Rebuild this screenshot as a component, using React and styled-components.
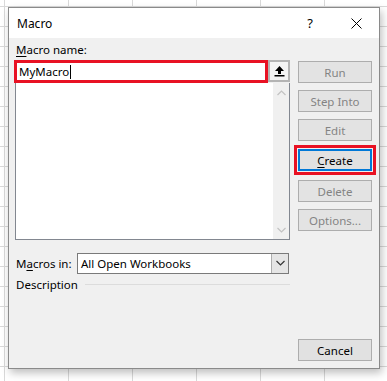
import { styled, createGlobalStyle } from "styled-components";

const GlobalStyle = createGlobalStyle`
  html, body {
    margin: 0;
    padding: 0;
  }
  body {
    width: 387px;
    height: 381px;
    overflow: hidden;
    background-color: #ffffff;
    background-image:
      linear-gradient(to right, #d9d9d9 1px, transparent 1px),
      linear-gradient(to bottom, #d9d9d9 1px, transparent 1px);
    background-size: 64px 20px;
    background-position: 4px 6px;
    font-family: "Noto Sans", "Open Sans", sans-serif;
    font-size: 11.5px;
  }
`;

const Dialog = styled.div`
  margin: 7px 0 0 8px;
  width: 370px;
  height: 360px;
  border: 1px solid #8a8a8a;
  background: #f0f0f0;
  box-shadow: 2px 4px 8px rgba(0, 0, 0, 0.25);
  display: flex;
  flex-direction: column;
`;

const TitleBar = styled.div`
  height: 30px;
  background: #ffffff;
  display: flex;
  align-items: center;
  padding-left: 8px;
  color: #000;
  font-size: 12px;
`;

const Title = styled.span`
  flex: 1;
`;

const TitleButton = styled.span`
  width: 46px;
  display: flex;
  justify-content: center;
  align-items: center;
  font-size: 13px;
`;

const Body = styled.div`
  flex: 1;
  display: flex;
  padding: 0 7px 7px 5px;
`;

const LeftCol = styled.div`
  width: 276px;
  display: flex;
  flex-direction: column;
`;

const RightCol = styled.div`
  margin-left: 8px;
  width: 75px;
  display: flex;
  flex-direction: column;
  padding-top: 23px;
`;

const Label = styled.div`
  padding-left: 2px;
  height: 22px;
  line-height: 18px;
  padding-top: 3px;
  box-sizing: border-box;
  color: #000;
  u {
    text-decoration: underline;
    text-underline-offset: 2px;
  }
`;

const NameRow = styled.div`
  display: flex;
  height: 23px;
`;

const NameInput = styled.div`
  width: 254px;
  box-sizing: border-box;
  border: 3px solid #e81123;
  background: #fff;
  padding-left: 2px;
  line-height: 17px;
  color: #000;
  display: flex;
  align-items: center;
`;

const Caret = styled.span`
  display: inline-block;
  width: 1px;
  height: 14px;
  background: #000;
  margin-left: 1px;
`;

const CollapseButton = styled.div`
  width: 22px;
  height: 22px;
  box-sizing: border-box;
  border: 2px solid #b4b4b4;
  background: #f4f4f4;
  display: flex;
  align-items: center;
  justify-content: center;
`;

const ListBox = styled.div`
  margin-left: 1px;
  height: 157px;
  box-sizing: border-box;
  border: 1px solid #828790;
  border-top: none;
  background: #fff;
  display: flex;
  justify-content: flex-end;
`;

const ScrollBar = styled.div`
  width: 16px;
  background: #f0f0f0;
  display: flex;
  flex-direction: column;
  justify-content: space-between;
  align-items: center;
  padding: 7px 0 6px;
`;

const ComboRow = styled.div`
  margin-top: 13px;
  display: flex;
  align-items: center;
  height: 20px;
`;

const ComboLabel = styled.span`
  width: 61px;
  padding-left: 2px;
  color: #000;
  u {
    text-decoration: underline;
    text-underline-offset: 2px;
  }
`;

const Combo = styled.div`
  width: 212px;
  height: 21px;
  box-sizing: border-box;
  border: 1px solid #7a7a7a;
  background: #fff;
  display: flex;
  align-items: center;
`;

const ComboText = styled.span`
  flex: 1;
  padding-left: 3px;
  color: #000;
`;

const ComboArrow = styled.span`
  width: 16px;
  height: 19px;
  background: #e5e5e5;
  border-left: 1px solid #adadad;
  display: flex;
  align-items: center;
  justify-content: center;
`;

const DescRow = styled.div`
  margin-top: 2px;
  display: flex;
  align-items: center;
  height: 18px;
`;

const DescText = styled.span`
  padding-left: 2px;
  color: #000;
`;

const DescLine = styled.span`
  flex: 1;
  height: 1px;
  background: #dcdcdc;
  margin-left: 7px;
`;

const Button = styled.div`
  height: 22px;
  box-sizing: border-box;
  margin-top: ${(p) => p.$gap || 0}px;
  border: ${(p) => (p.$focused ? "2px solid #0078d7" : "1px solid #adadad")};
  background: ${(p) => (p.$disabled ? "#e3e3e3" : "#e1e1e1")};
  color: ${(p) => (p.$disabled ? "#838383" : "#000")};
  display: flex;
  align-items: center;
  justify-content: center;
  outline: ${(p) => (p.$highlight ? "3px solid #e81123" : "none")};
  outline-offset: 1px;
  u {
    text-decoration: underline;
    text-underline-offset: 2px;
  }
`;

const Spacer = styled.div`
  flex: 1;
`;

const Chevron = ({ up, color }) => (
  <svg width="9" height="6" viewBox="0 0 9 6">
    <path
      d={up ? "M0.5 5 L4.5 1 L8.5 5" : "M0.5 1 L4.5 5 L8.5 1"}
      fill="none"
      stroke={color}
      strokeWidth="1.2"
    />
  </svg>
);

const App = () => {
  return (
    <>
      <GlobalStyle />
      <Dialog>
        <TitleBar>
          <Title>Macro</Title>
          <TitleButton>?</TitleButton>
          <TitleButton>
            <svg width="11" height="11" viewBox="0 0 11 11">
              <path d="M0.5 0.5 L10.5 10.5 M10.5 0.5 L0.5 10.5" stroke="#000" strokeWidth="1" />
            </svg>
          </TitleButton>
        </TitleBar>
        <Body>
          <LeftCol>
            <Label>
              <u>M</u>acro name:
            </Label>
            <NameRow>
              <NameInput>
                MyMacro
                <Caret />
              </NameInput>
              <CollapseButton>
                <svg width="11" height="12" viewBox="0 0 11 12">
                  <path d="M5.5 1 L10 6 L7 6 L7 9 L4 9 L4 6 L1 6 Z" fill="#000" />
                  <rect x="0.5" y="10" width="10" height="1.5" fill="#000" />
                </svg>
              </CollapseButton>
            </NameRow>
            <ListBox>
              <ScrollBar>
                <Chevron up color="#c2c2c2" />
                <Chevron color="#c2c2c2" />
              </ScrollBar>
            </ListBox>
            <ComboRow>
              <ComboLabel>
                M<u>a</u>cros in:
              </ComboLabel>
              <Combo>
                <ComboText>All Open Workbooks</ComboText>
                <ComboArrow>
                  <Chevron color="#333" />
                </ComboArrow>
              </Combo>
            </ComboRow>
            <DescRow>
              <DescText>Description</DescText>
              <DescLine />
            </DescRow>
          </LeftCol>
          <RightCol>
            <Button $disabled>Run</Button>
            <Button $disabled $gap={7}>Step Into</Button>
            <Button $disabled $gap={7}>Edit</Button>
            <Button $focused $highlight $gap={8}>
              <u>C</u>reate
            </Button>
            <Button $disabled $gap={9}>Delete</Button>
            <Button $disabled $gap={7}>Options...</Button>
            <Spacer />
            <Button>Cancel</Button>
          </RightCol>
        </Body>
      </Dialog>
    </>
  );
};

export default App;
